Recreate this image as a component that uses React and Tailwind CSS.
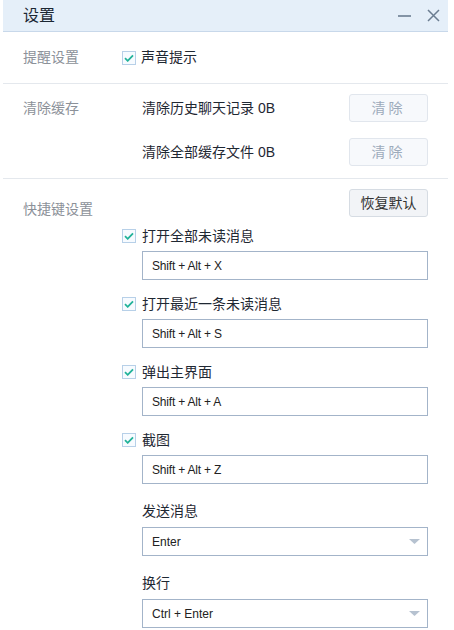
import React from "react";

const font = "font-['Liberation_Sans','Noto_Sans_CJK_SC',sans-serif]";

function Check() {
  return (
    <span className="flex h-[14px] w-[14px] shrink-0 items-center justify-center border border-[#b7d0e8] bg-[#f7fbff]">
      <svg width="10" height="8" viewBox="0 0 10 8">
        <path d="M1 4.2l2.7 2.6L9 1.4" fill="none" stroke="#22b39a" strokeWidth="1.8" />
      </svg>
    </span>
  );
}

function Shortcut({ label, keys, first }) {
  return (
    <div className={first ? "mt-[7px]" : "mt-[14px]"}>
      <div className="flex h-[20px] items-center gap-[6px] text-[14px] text-[#1f2833]">
        <Check />
        <span>{label}</span>
      </div>
      <div className="ml-[20px] mt-[5px] flex h-[29px] w-[286px] items-center border border-[#a3b4c9] bg-white pl-[9px] text-[12px] tracking-[-0.2px] text-[#222]">
        {keys}
      </div>
    </div>
  );
}

function Select({ label, value }) {
  return (
    <div>
      <div className="ml-[20px] mt-[17px] h-[20px] text-[14px] leading-[20px] text-[#1f2833]">{label}</div>
      <div className="ml-[20px] mt-[6px] flex h-[29px] w-[286px] items-center justify-between border border-[#a3b4c9] bg-white pl-[9px] pr-[7px] text-[12px] text-[#222]">
        <span>{value}</span>
        <svg width="11" height="5" viewBox="0 0 11 5">
          <path d="M0 0h11L5.5 5z" fill="#b6c2d0" />
        </svg>
      </div>
    </div>
  );
}

function ClearRow({ label, text, className }) {
  return (
    <div className={"flex h-[28px] items-center " + (className || "")}>
      <div className="w-[139px] pl-[20px] text-[14px] text-[#8c9199]">{label}</div>
      <div className="flex-1 text-[14px] text-[#1f2833]">{text}</div>
      <button className="mr-[20px] h-[28px] w-[79px] rounded-[3px] border border-[#e1e6ed] bg-[#f7f9fc] text-[14px] tracking-[3px] text-[#9dabbb]">
        清除
      </button>
    </div>
  );
}

export default function App() {
  return (
    <div className={"h-[630px] w-[454px] overflow-hidden bg-white " + font}>
      <div className="ml-[3px] w-[445px]">
        {/* Title bar */}
        <div className="flex h-[32px] items-center justify-between border-b border-[#c8d8ea] bg-[#e5eff9] pl-[20px] pr-[8px]">
          <span className="text-[16px] text-[#1b2733]">设置</span>
          <div className="flex items-center gap-[16px]">
            <svg width="13" height="13" viewBox="0 0 13 13">
              <path d="M0 7h13" stroke="#6b7d91" strokeWidth="1.6" />
            </svg>
            <svg width="13" height="13" viewBox="0 0 13 13">
              <path d="M1 1l11 11M12 1L1 12" stroke="#6b7d91" strokeWidth="1.5" />
            </svg>
          </div>
        </div>

        {/* 提醒设置 */}
        <div className="flex h-[52px] items-center border-b border-[#e4e8ed]">
          <div className="w-[119px] pl-[20px] text-[14px] text-[#8c9199]">提醒设置</div>
          <div className="flex items-center gap-[5px] text-[14px] text-[#1f2833]">
            <Check />
            <span>声音提示</span>
          </div>
        </div>

        {/* 清除缓存 */}
        <div className="border-b border-[#e4e8ed] pb-[12px] pt-[10px]">
          <ClearRow label="清除缓存" text="清除历史聊天记录 0B" />
          <ClearRow label="" text="清除全部缓存文件 0B" className="mt-[16px]" />
        </div>

        {/* 快捷键设置 */}
        <div className="pt-[10px]">
          <div className="flex items-start justify-between pl-[20px] pr-[20px]">
            <div className="mt-[10px] text-[14px] leading-[20px] text-[#8c9199]">快捷键设置</div>
            <button className="h-[28px] w-[79px] rounded-[3px] border border-[#d6dce3] bg-[#f2f4f7] text-[14px] text-[#333]">
              恢复默认
            </button>
          </div>
          <div className="pl-[119px]">
            <Shortcut first label="打开全部未读消息" keys="Shift + Alt + X" />
            <Shortcut label="打开最近一条未读消息" keys="Shift + Alt + S" />
            <Shortcut label="弹出主界面" keys="Shift + Alt + A" />
            <Shortcut label="截图" keys="Shift + Alt + Z" />
            <Select label="发送消息" value="Enter" />
            <Select label="换行" value="Ctrl + Enter" />
          </div>
        </div>
      </div>
    </div>
  );
}
